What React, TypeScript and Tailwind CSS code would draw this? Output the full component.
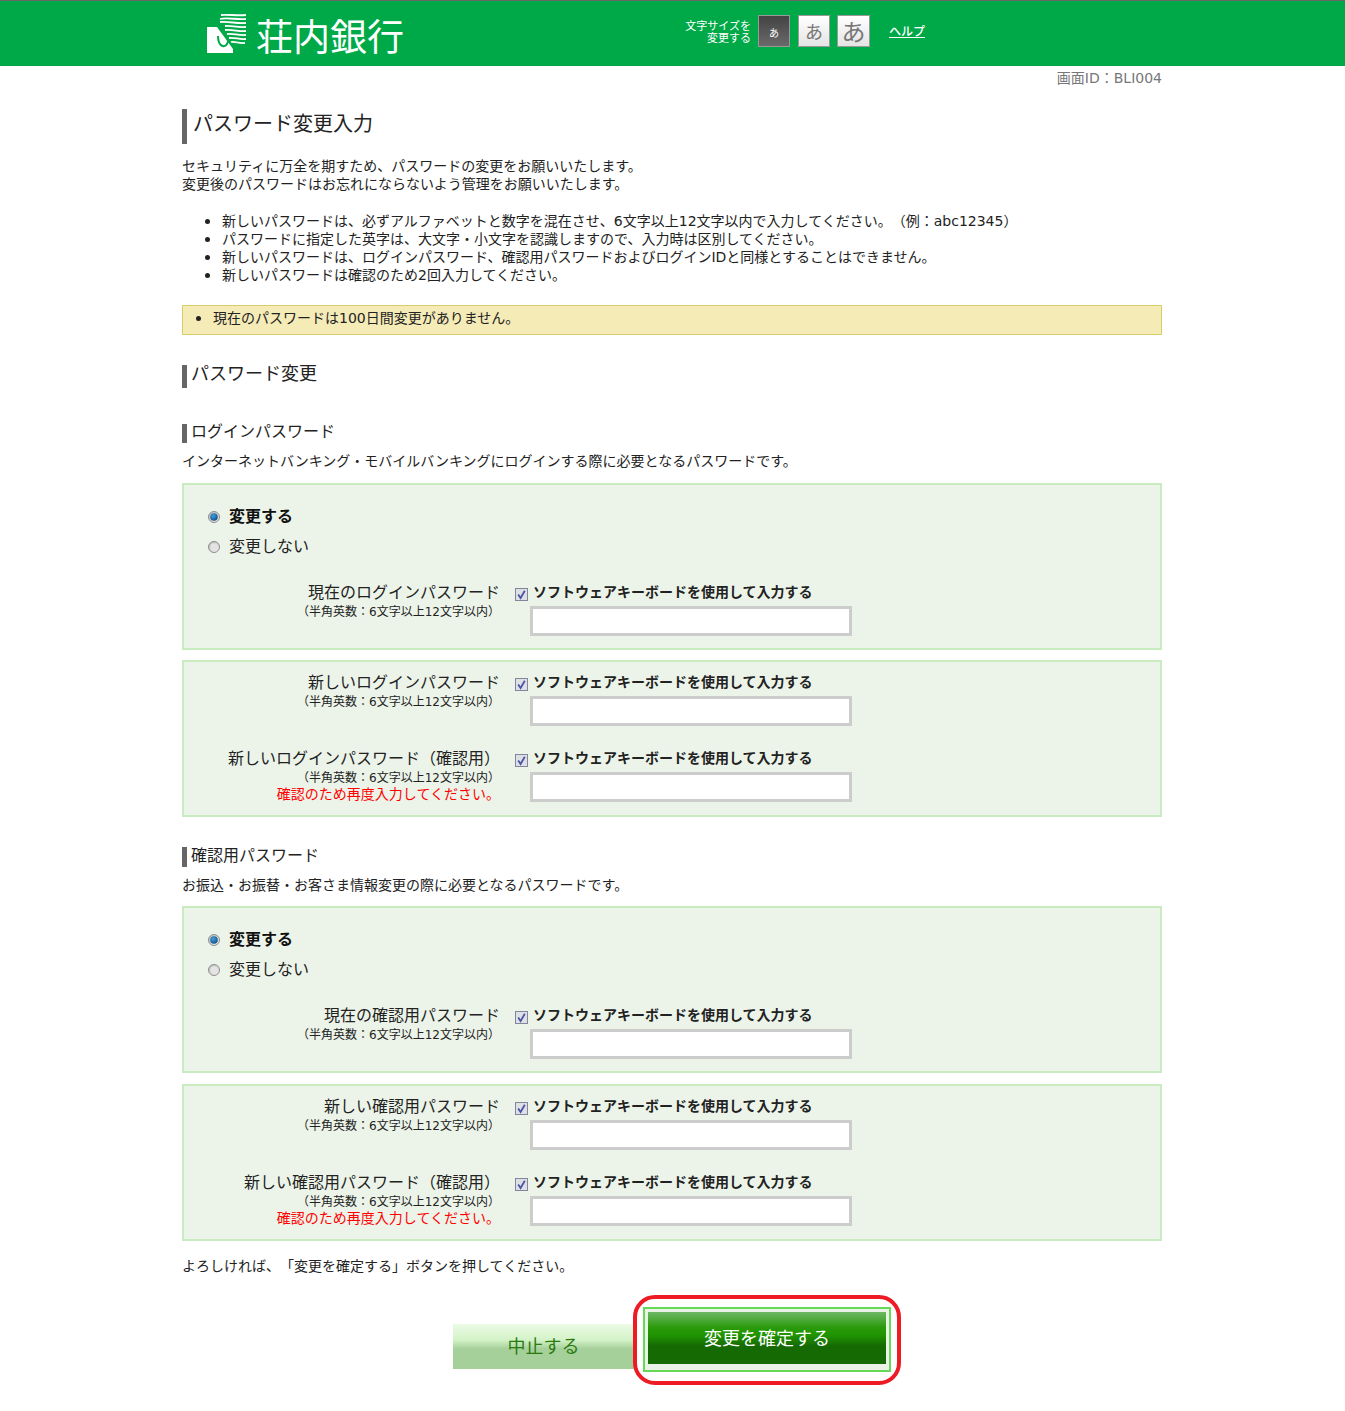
import React from "react";

const Radio = ({ checked }: { checked?: boolean }) => (
  <svg width="14" height="14" viewBox="0 0 14 14" className="shrink-0 mt-[2px]">
    <defs>
      <linearGradient id="radioBg" x1="0" y1="0" x2="1" y2="1">
        <stop offset="0" stopColor="#b4b4b4" />
        <stop offset="1" stopColor="#f4f4f4" />
      </linearGradient>
      <radialGradient id="radioDot" cx="0.4" cy="0.35" r="0.7">
        <stop offset="0" stopColor="#3f9fdc" />
        <stop offset="1" stopColor="#0f4f85" />
      </radialGradient>
    </defs>
    <circle cx="7" cy="7" r="5.5" fill="url(#radioBg)" stroke="#8f8f8f" />
    <circle cx="7" cy="7" r="3.8" fill={checked ? "url(#radioDot)" : "#e4e4e4"} />
  </svg>
);

const Check = () => (
  <svg width="13" height="13" viewBox="0 0 13 13" className="shrink-0">
    <rect x="0.5" y="0.5" width="12" height="12" fill="#dfe0e6" stroke="#83859a" />
    <path d="M3.2 6.4 L5.6 10 L9.8 2.8" fill="none" stroke="#4a55a5" strokeWidth="1.8" />
  </svg>
);

const Field = ({ label, confirm }: { label: string; confirm?: boolean }) => (
  <div className="flex">
    <div className="w-[316px] h-[54px] text-right">
      <div className="text-base leading-[22px] text-[#222]">{label}</div>
      <div className="text-xs leading-[17px] text-[#222]">（半角英数：6文字以上12文字以内）</div>
      {confirm && (
        <div className="-mt-px text-sm leading-[17px] text-[#ff0000]">確認のため再度入力してください。</div>
      )}
    </div>
    <div className="ml-[15px]">
      <div className="flex items-center h-5">
        <span className="mt-1">
          <Check />
        </span>
        <span className="ml-[5px] text-sm font-bold text-[#222]">ソフトウェアキーボードを使用して入力する</span>
      </div>
      <input className="block mt-1 ml-[15px] w-[322px] h-[30px] bg-white border-[3px] border-[#cccccc]" />
    </div>
  </div>
);

const ChoiceBox = ({ label }: { label: string }) => (
  <div className="border-2 border-[#c8ecc0] bg-[#ecf4e9] pt-4 pb-3">
    <div className="flex items-center h-[30px] pl-[23px] gap-2">
      <Radio checked />
      <span className="pt-[2px] text-base font-bold text-[#111]">変更する</span>
    </div>
    <div className="flex items-center h-[30px] pl-[23px] gap-2">
      <Radio />
      <span className="pt-[2px] text-base text-[#222]">変更しない</span>
    </div>
    <div className="mt-[21px]">
      <Field label={label} />
    </div>
  </div>
);

const NewBox = ({ label, labelConfirm }: { label: string; labelConfirm: string }) => (
  <div className="border-2 border-[#c8ecc0] bg-[#ecf4e9] pt-[10px] pb-[13px] flex flex-col gap-[22px]">
    <Field label={label} />
    <Field label={labelConfirm} confirm />
  </div>
);

const App = () => {
  return (
    <div
      className="min-h-[1411px] bg-white text-sm text-[#222] [text-spacing-trim:space-all]"
      style={{ fontFamily: '"DejaVu Sans", "Noto Sans CJK JP", sans-serif' }}
    >
      <header className="h-[66px] bg-[#00a947] border-t border-[#666666]">
        <div className="w-[980px] ml-[182px] flex items-start text-white">
          <svg width="40" height="40" viewBox="0 0 40 40" className="ml-[25px] mt-[13px]">
            <path d="M0 13 H10 L26 35 V39 H0 Z" fill="#fff" />
            <path d="M11 22 C11 34 20 35 21 27" fill="none" stroke="#00a947" strokeWidth="2" />
            <path
              d="M14 1 C20 0 30 2 39 1 M13 5 C20 3 30 6 39 5 M13 8 C22 7 30 10 39 9 M18 12 C24 11 30 14 39 13 M18 16 C26 15 32 18 39 17 M20 20 C26 19 32 22 39 21 M22 24 C28 23 32 26 39 25 M24 28 C28 27 32 30 38 29"
              fill="none"
              stroke="#fff"
              strokeWidth="1.8"
            />
          </svg>
          <div
            className="ml-[9px] mt-[11px] text-[37px] leading-[46px] whitespace-nowrap"
            style={{ fontFamily: '"Noto Sans CJK JP", sans-serif' }}
          >
            荘内銀行
          </div>
          <div className="ml-[281px] mt-5 w-[66px] text-right text-[11px] leading-[12px] whitespace-nowrap">
            文字サイズを
            <br />
            変更する
          </div>
          <div className="ml-[7px] mt-[14px] w-8 h-8 border border-[#999999] bg-gradient-to-b from-[#444444] to-[#6a6a6a] flex items-center justify-center pt-[6px] text-[10px]">
            あ
          </div>
          <div className="ml-2 mt-[14px] w-8 h-8 border border-[#999999] bg-gradient-to-b from-white to-[#e4e4e4] flex items-center justify-center pt-1 text-lg text-[#777777]">
            あ
          </div>
          <div className="ml-[7px] mt-[14px] w-[33px] h-8 border border-[#999999] bg-gradient-to-b from-white to-[#e4e4e4] flex items-center justify-center pt-1 text-2xl text-[#777777]">
            あ
          </div>
          <a className="ml-[19px] mt-[22px] text-xs leading-[18px] font-medium underline whitespace-nowrap">ヘルプ</a>
        </div>
      </header>

      <main className="w-[980px] ml-[182px]">
        <div className="text-right text-sm leading-5 text-[#777777] mt-[2px]">画面ID：BLI004</div>

        <h1 className="mt-[21px] h-[35px] border-l-[5px] border-[#666666] pl-[6px] text-xl leading-[30px] font-normal text-[#222]">
          パスワード変更入力
        </h1>

        <p className="mt-[13px] leading-[18px]">
          セキュリティに万全を期すため、パスワードの変更をお願いいたします。
          <br />
          変更後のパスワードはお忘れにならないよう管理をお願いいたします。
        </p>

        <ul className="mt-[18px] ml-10 list-disc leading-[18px] marker:[font-family:'Noto_Sans_CJK_JP'] [&>li]:h-[18px]">
          <li>新しいパスワードは、必ずアルファベットと数字を混在させ、6文字以上12文字以内で入力してください。（例：abc12345）</li>
          <li>パスワードに指定した英字は、大文字・小文字を認識しますので、入力時は区別してください。</li>
          <li>新しいパスワードは、ログインパスワード、確認用パスワードおよびログインIDと同様とすることはできません。</li>
          <li>新しいパスワードは確認のため2回入力してください。</li>
        </ul>

        <div className="mt-[22px] h-[30px] border border-[#d8cb6a] bg-[#f5ebb7] pl-[30px] pb-[5px] flex items-center">
          <ul className="list-disc marker:[font-family:'Noto_Sans_CJK_JP']">
            <li>現在のパスワードは100日間変更がありません。</li>
          </ul>
        </div>

        <h2 className="mt-[30px] h-[23px] border-l-[5px] border-[#666666] pl-1 text-lg leading-[17px] font-normal text-[#222]">
          パスワード変更
        </h2>

        <h3 className="mt-9 h-[19px] border-l-[5px] border-[#666666] pl-1 text-base leading-[15px] font-normal text-[#222]">
          ログインパスワード
        </h3>
        <p className="mt-2 leading-5">インターネットバンキング・モバイルバンキングにログインする際に必要となるパスワードです。</p>

        <div className="mt-3">
          <ChoiceBox label="現在のログインパスワード" />
        </div>
        <div className="mt-[10px]">
          <NewBox label="新しいログインパスワード" labelConfirm="新しいログインパスワード（確認用）" />
        </div>

        <h3 className="mt-[30px] h-5 border-l-[5px] border-[#666666] pl-1 text-base leading-[17px] font-normal text-[#222]">
          確認用パスワード
        </h3>
        <p className="mt-2 leading-5">お振込・お振替・お客さま情報変更の際に必要となるパスワードです。</p>

        <div className="mt-[11px]">
          <ChoiceBox label="現在の確認用パスワード" />
        </div>
        <div className="mt-[11px]">
          <NewBox label="新しい確認用パスワード" labelConfirm="新しい確認用パスワード（確認用）" />
        </div>

        <p className="mt-[15px] leading-5">よろしければ、「変更を確定する」ボタンを押してください。</p>

        <div className="mt-[31px] flex justify-center items-start">
          <button className="mt-[17px] w-[187px] h-[45px] pr-[6px] bg-[linear-gradient(#ebfbe6,#d4f3c8_35%,#a6d09a_55%,#a6d09a)] text-lg text-[#2a7a10]">
            中止する
          </button>
          <div className="relative ml-[3px]">
            <div className="absolute -left-[10px] -right-[10px] -top-3 -bottom-[13px] rounded-[22px] border-4 border-[#ed1c24] bg-white" />
            <div className="relative w-[248px] h-[65px] border-2 border-[#66d955] bg-[#ebf3e8] p-[3px]">
              <button className="block w-full h-[52px] pt-px bg-[linear-gradient(#6fb866,#2a9a0a_30%,#1f9400_45%,#166a04_65%,#166a04)] text-lg text-white">
                変更を確定する
              </button>
            </div>
          </div>
        </div>
      </main>
    </div>
  );
};

export default App;
